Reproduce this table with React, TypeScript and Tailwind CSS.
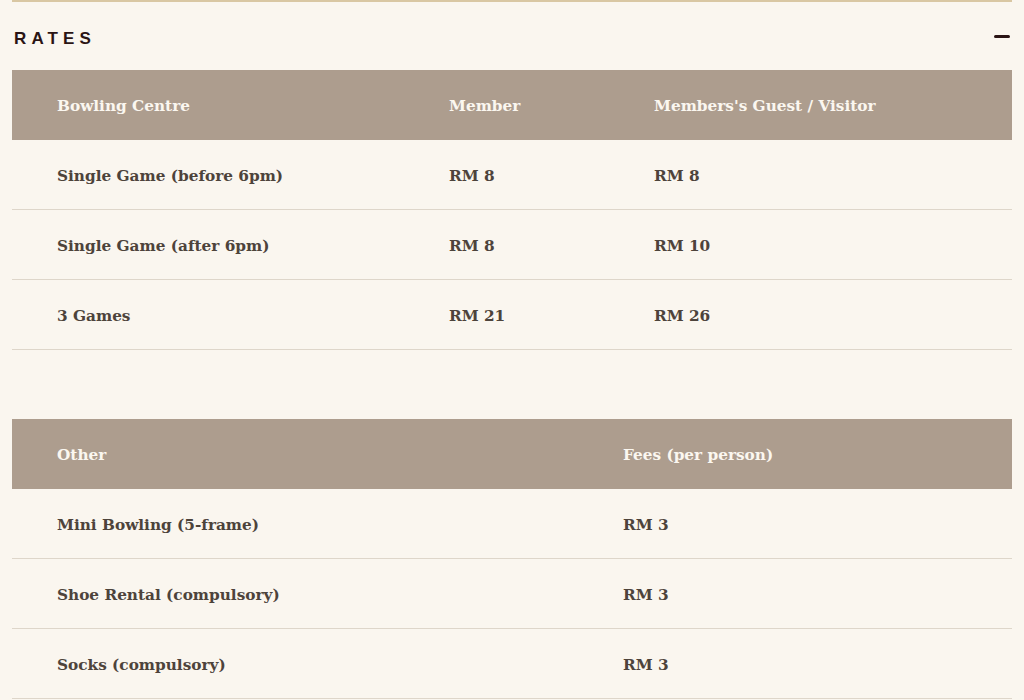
const bowling = [
  { name: "Single Game (before 6pm)", member: "RM 8", guest: "RM 8" },
  { name: "Single Game (after 6pm)", member: "RM 8", guest: "RM 10" },
  { name: "3 Games", member: "RM 21", guest: "RM 26" },
];

const others = [
  { name: "Mini Bowling (5-frame)", fee: "RM 3" },
  { name: "Shoe Rental (compulsory)", fee: "RM 3" },
  { name: "Socks (compulsory)", fee: "RM 3" },
];

const serif = "font-['DejaVu_Serif',serif] font-bold text-[15.3px]";

const App = () => {
  return (
    <div className="min-h-[700px] w-[1024px] bg-[#faf6ef] overflow-hidden">
      <div className="mx-[12px] border-t-2 border-[#d9c7a3]">
        {/* accordion header */}
        <div className="flex items-center justify-between h-[68px] px-[2px]">
          <h2 className="mt-[6px] font-['Liberation_Sans',sans-serif] font-bold text-[17px] tracking-[0.3em] text-[#2a1414]">
            RATES
          </h2>
          <span className="block w-[16px] h-[3px] rounded-full bg-[#2a1414]" />
        </div>

        {/* bowling table */}
        <div className={serif}>
          <div className="grid grid-cols-[392px_205px_1fr] h-[70px] items-center bg-[#ad9d8e] text-[#fbf7f0] px-[45px] pt-[3px]">
            <div>Bowling Centre</div>
            <div>Member</div>
            <div>Members's Guest / Visitor</div>
          </div>
          {bowling.map((row) => (
            <div
              key={row.name}
              className="grid grid-cols-[392px_205px_1fr] h-[70px] items-center border-b border-[#ded6ca] text-[#4d433b] px-[45px] pt-[4px]"
            >
              <div>{row.name}</div>
              <div>{row.member}</div>
              <div>{row.guest}</div>
            </div>
          ))}
        </div>

        <div className="h-[69px]" />

        {/* other fees table */}
        <div className={serif}>
          <div className="grid grid-cols-[566px_1fr] h-[70px] items-center bg-[#ad9d8e] text-[#fbf7f0] px-[45px] pt-[3px]">
            <div>Other</div>
            <div>Fees (per person)</div>
          </div>
          {others.map((row) => (
            <div
              key={row.name}
              className="grid grid-cols-[566px_1fr] h-[70px] items-center border-b border-[#ded6ca] text-[#4d433b] px-[45px] pt-[4px]"
            >
              <div>{row.name}</div>
              <div>{row.fee}</div>
            </div>
          ))}
        </div>
      </div>
    </div>
  );
};

export default App;
